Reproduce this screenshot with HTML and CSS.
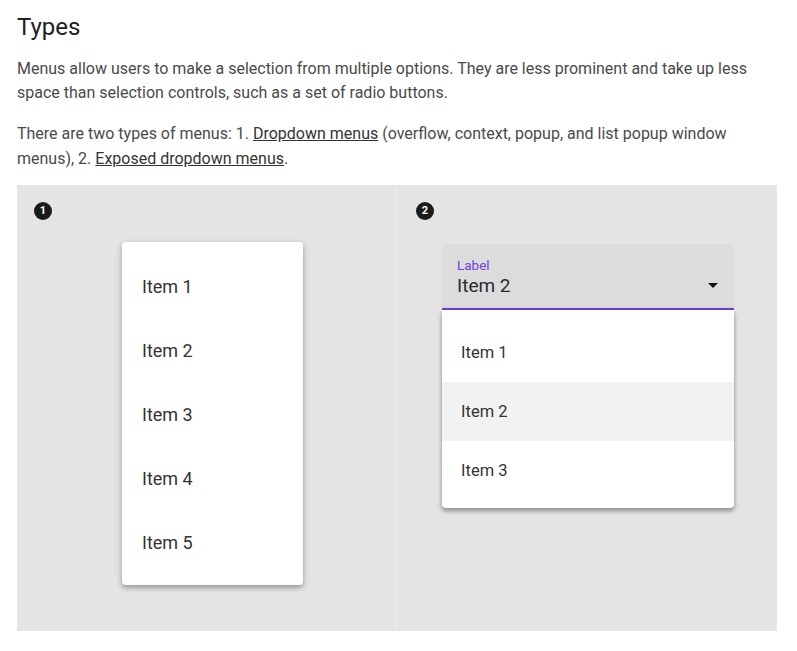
FILE: index.html
```html
<!DOCTYPE html>
<html>
<head>
<meta charset="utf-8">
<link rel="stylesheet" href="styles.css">
</head>
<body>
<main class="page">
  <h2 class="title">Types</h2>
  <p class="text">Menus allow users to make a selection from multiple options. They are less prominent and take up less space than selection controls, such as a set of radio buttons.</p>
  <p class="text">There are two types of menus: 1. <a class="link" href="#">Dropdown menus</a> (overflow, context, popup, and list popup window menus), 2. <a class="link" href="#">Exposed dropdown menus</a>.</p>
  <section class="demo">
    <div class="panel panel-left">
      <span class="badge">1</span>
      <ul class="menu">
        <li class="menu-item">Item 1</li>
        <li class="menu-item">Item 2</li>
        <li class="menu-item">Item 3</li>
        <li class="menu-item">Item 4</li>
        <li class="menu-item">Item 5</li>
      </ul>
    </div>
    <div class="panel panel-right">
      <span class="badge">2</span>
      <div class="exposed">
        <div class="field">
          <div class="field-text">
            <span class="field-label">Label</span>
            <span class="field-value">Item 2</span>
          </div>
          <span class="arrow"></span>
        </div>
        <ul class="dropdown">
          <li class="drop-item">Item 1</li>
          <li class="drop-item drop-item-active">Item 2</li>
          <li class="drop-item">Item 3</li>
        </ul>
      </div>
    </div>
  </section>
</main>
</body>
</html>
```

FILE: styles.css
```css
* { box-sizing: border-box; }
html, body { margin: 0; padding: 0; background: #fff; }
body { font-family: Roboto, "Noto Sans", Arial, sans-serif; }
.page { padding: 12px 20px 0 17px; }
.title {
  margin: 0;
  font-size: 24px;
  line-height: 30px;
  font-weight: 400;
  color: #202124;
}
.text {
  margin: 15px 0 0;
  font-size: 16px;
  line-height: 24px;
  color: #4a4a4a;
}
.text + .text { margin-top: 16px; line-height: 25px; }
.link { color: #333; text-decoration: underline; }
.demo {
  margin-top: 14px;
  display: grid;
  grid-template-columns: 379px 381px;
  height: 446px;
  background: #e4e4e4;
}
.panel { padding: 17px; display: flex; flex-direction: column; align-items: flex-start; }
.panel-right { border-left: 1px solid #ebebeb; padding-left: 19px; }
.badge {
  width: 18px; height: 18px; border-radius: 50%;
  background: #1a1a1a; color: #fff;
  font-size: 11px; font-weight: 700; line-height: 18px; text-align: center;
}
.menu {
  list-style: none;
  margin: 22px 0 0 88px;
  padding: 12px 0 11px;
  width: 181px;
  background: #fff;
  border-radius: 4px;
  box-shadow: 0 3px 5px rgba(0,0,0,0.28), 0 1px 10px rgba(0,0,0,0.08);
}
.menu-item {
  height: 64px;
  display: flex; align-items: center;
  padding-left: 20px;
  font-size: 18px;
  color: #333;
}
.exposed { margin: 24px 0 0 26px; width: 292px; }
.field {
  height: 66px;
  background: #dcdcdc;
  border-radius: 4px 4px 0 0;
  border-bottom: 2px solid #6b3fe0;
  padding: 13px 16px 0 15px;
  display: flex; justify-content: space-between; align-items: flex-start;
}
.field-text { display: flex; flex-direction: column; }
.field-label { font-size: 13.5px; line-height: 16px; color: #6f42e6; }
.field-value { font-size: 19px; line-height: 25px; color: #2b2b2b; }
.arrow {
  margin-top: 26px;
  width: 0; height: 0;
  border-left: 5.5px solid transparent;
  border-right: 5.5px solid transparent;
  border-top: 5.5px solid #111;
}
.dropdown {
  list-style: none;
  margin: 0;
  padding: 13px 0 8px;
  background: #fff;
  border-radius: 0 0 4px 4px;
  box-shadow: 0 3px 4px rgba(0,0,0,0.35), 0 1px 8px rgba(0,0,0,0.08);
}
.drop-item {
  height: 59px;
  display: flex; align-items: center;
  padding-left: 19px;
  font-size: 16.5px;
  color: #333;
}
.drop-item-active { background: #f2f2f2; }
```
